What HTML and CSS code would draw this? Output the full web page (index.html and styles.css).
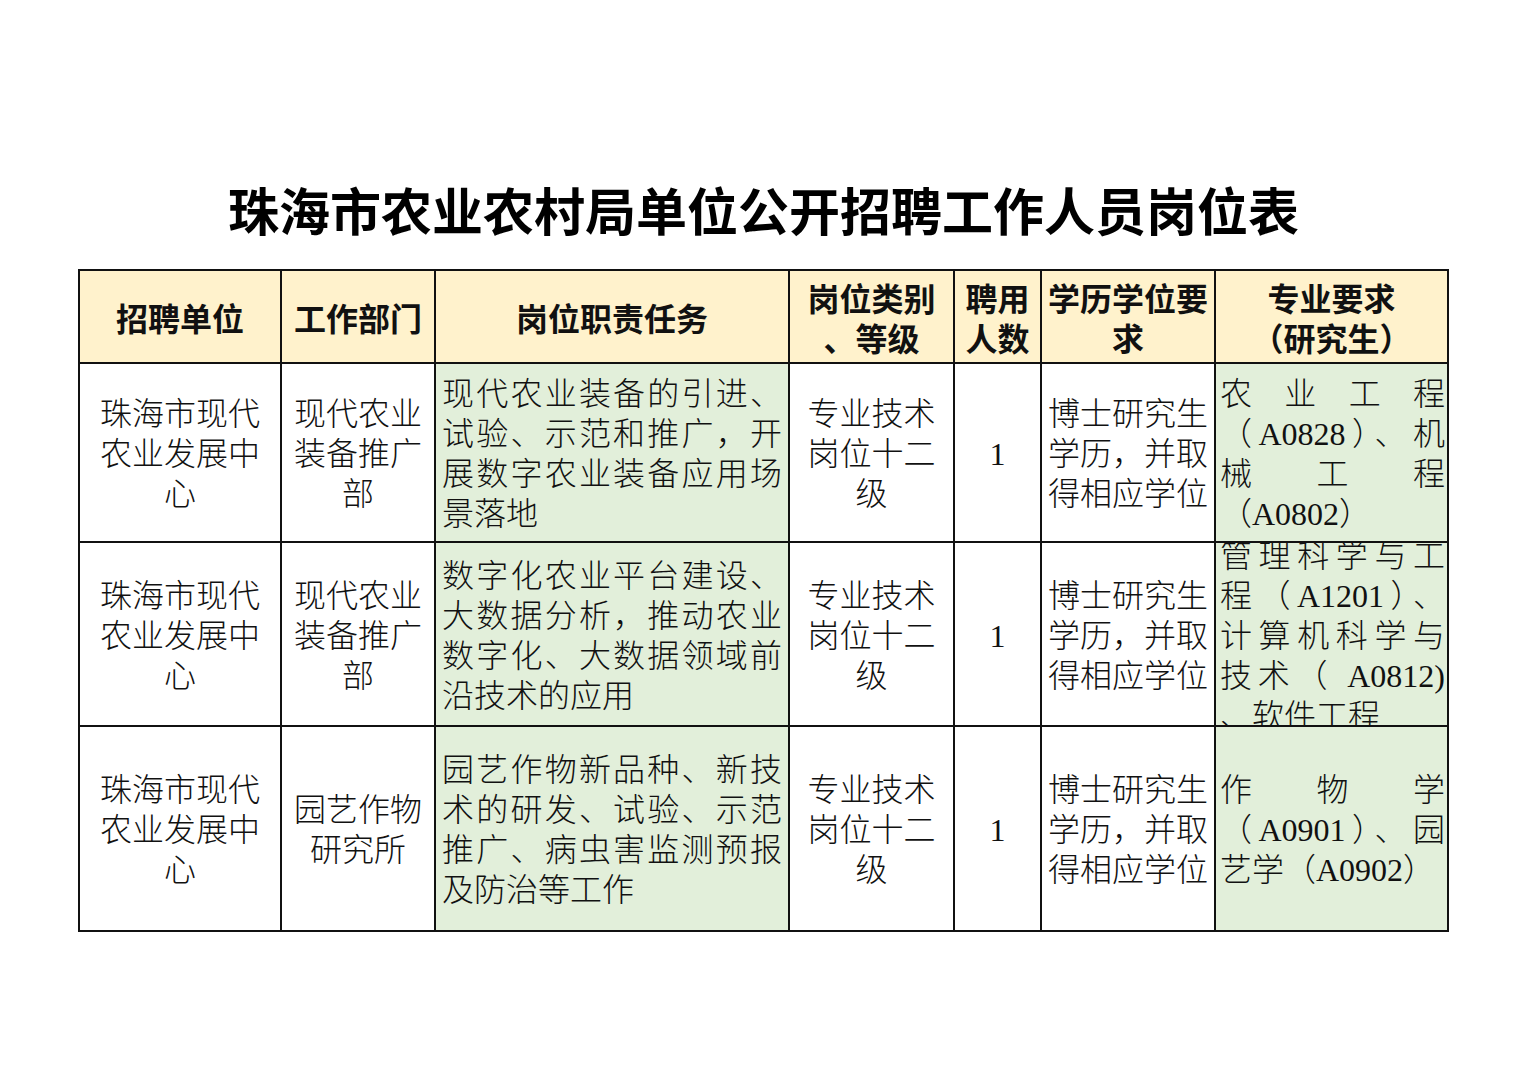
FILE: index.html
```html
<!DOCTYPE html>
<html lang="zh-CN">
<head>
<meta charset="utf-8">
<title>珠海市农业农村局单位公开招聘工作人员岗位表</title>
<link rel="stylesheet" href="styles.css">
</head>
<body>
<div class="page">
  <h1 class="title">珠海市农业农村局单位公开招聘工作人员岗位表</h1>
  <div class="table">
    <div class="cell head">招聘单位</div>
    <div class="cell head">工作部门</div>
    <div class="cell head">岗位职责任务</div>
    <div class="cell head">岗位类别<br>、等级</div>
    <div class="cell head">聘用<br>人数</div>
    <div class="cell head">学历学位要<br>求</div>
    <div class="cell head">专业要求<br>（研究生）</div>

    <div class="cell c1">珠海市现代农业发展中心</div>
    <div class="cell c2">现代农业装备推广部</div>
    <div class="cell c3 green">现代农业装备的引进、试验、示范和推广，开展数字农业装备应用场景落地</div>
    <div class="cell c4">专业技术岗位十二级</div>
    <div class="cell c5">1</div>
    <div class="cell c6">博士研究生学历，并取得相应学位</div>
    <div class="cell c7 green">
      <div class="lines">
        <div class="ln full">农业工程</div>
        <div class="ln full">（A0828）、机</div>
        <div class="ln full">械工程</div>
        <div class="ln">（A0802）</div>
      </div>
    </div>

    <div class="cell c1">珠海市现代农业发展中心</div>
    <div class="cell c2">现代农业装备推广部</div>
    <div class="cell c3 green">数字化农业平台建设、大数据分析，推动农业数字化、大数据领域前沿技术的应用</div>
    <div class="cell c4">专业技术岗位十二级</div>
    <div class="cell c5">1</div>
    <div class="cell c6">博士研究生学历，并取得相应学位</div>
    <div class="cell c7 green">
      <div class="lines">
        <div class="ln full">管理科学与工</div>
        <div class="ln full">程（A1201）、</div>
        <div class="ln full">计算机科学与</div>
        <div class="ln full">技术（ A0812)</div>
        <div class="ln">、软件工程</div>
      </div>
    </div>

    <div class="cell c1">珠海市现代农业发展中心</div>
    <div class="cell c2">园艺作物研究所</div>
    <div class="cell c3 green">园艺作物新品种、新技术的研发、试验、示范推广、病虫害监测预报及防治等工作</div>
    <div class="cell c4">专业技术岗位十二级</div>
    <div class="cell c5">1</div>
    <div class="cell c6">博士研究生学历，并取得相应学位</div>
    <div class="cell c7 green">
      <div class="lines">
        <div class="ln full">作物学</div>
        <div class="ln full">（A0901）、园</div>
        <div class="ln">艺学（A0902）</div>
      </div>
    </div>
  </div>
</div>
</body>
</html>
```

FILE: styles.css
```css
html, body {
  margin: 0;
  padding: 0;
  background: #ffffff;
}

.page {
  width: 1527px;
  padding-top: 178px;
}

.title {
  margin: 0;
  height: 62px;
  line-height: 62px;
  text-align: center;
  font-family: "Noto Sans CJK SC", sans-serif;
  font-weight: 700;
  font-size: 51px;
  color: #000;
}

.table {
  margin: 29px auto 0;
  width: 1371px;
  box-sizing: border-box;
  display: grid;
  grid-template-columns: 200px 152px 352px 163px 85px 172px 231px;
  grid-template-rows: 91px 177px 182px 203px;
  gap: 2px;
  padding: 2px;
  background: #111;
}

.cell {
  background: #ffffff;
  display: flex;
  flex-direction: column;
  justify-content: center;
  overflow: hidden;
  font-family: "Liberation Serif", "Noto Sans CJK SC", serif;
  font-weight: 300;
  font-size: 32px;
  line-height: 40px;
  color: #111;
  text-align: center;
  padding: 3px 6px 0;
  box-sizing: border-box;
}

.head {
  background: #fff2cc;
  font-family: "Noto Sans CJK SC", sans-serif;
  font-weight: 700;
  padding: 0 2px;
}

.green {
  background: #e2efda;
}

.c3 {
  text-align: justify;
  padding: 3px 6px 0;
}

.c6 {
  padding: 3px 4px 0;
}

.c7 {
  padding: 3px 2px 0 4px;
  text-align: left;
}

.lines {
  width: 225px;
}

.ln {
  white-space: nowrap;
  text-align: left;
}

.ln.full {
  text-align: justify;
  text-align-last: justify;
}
```
